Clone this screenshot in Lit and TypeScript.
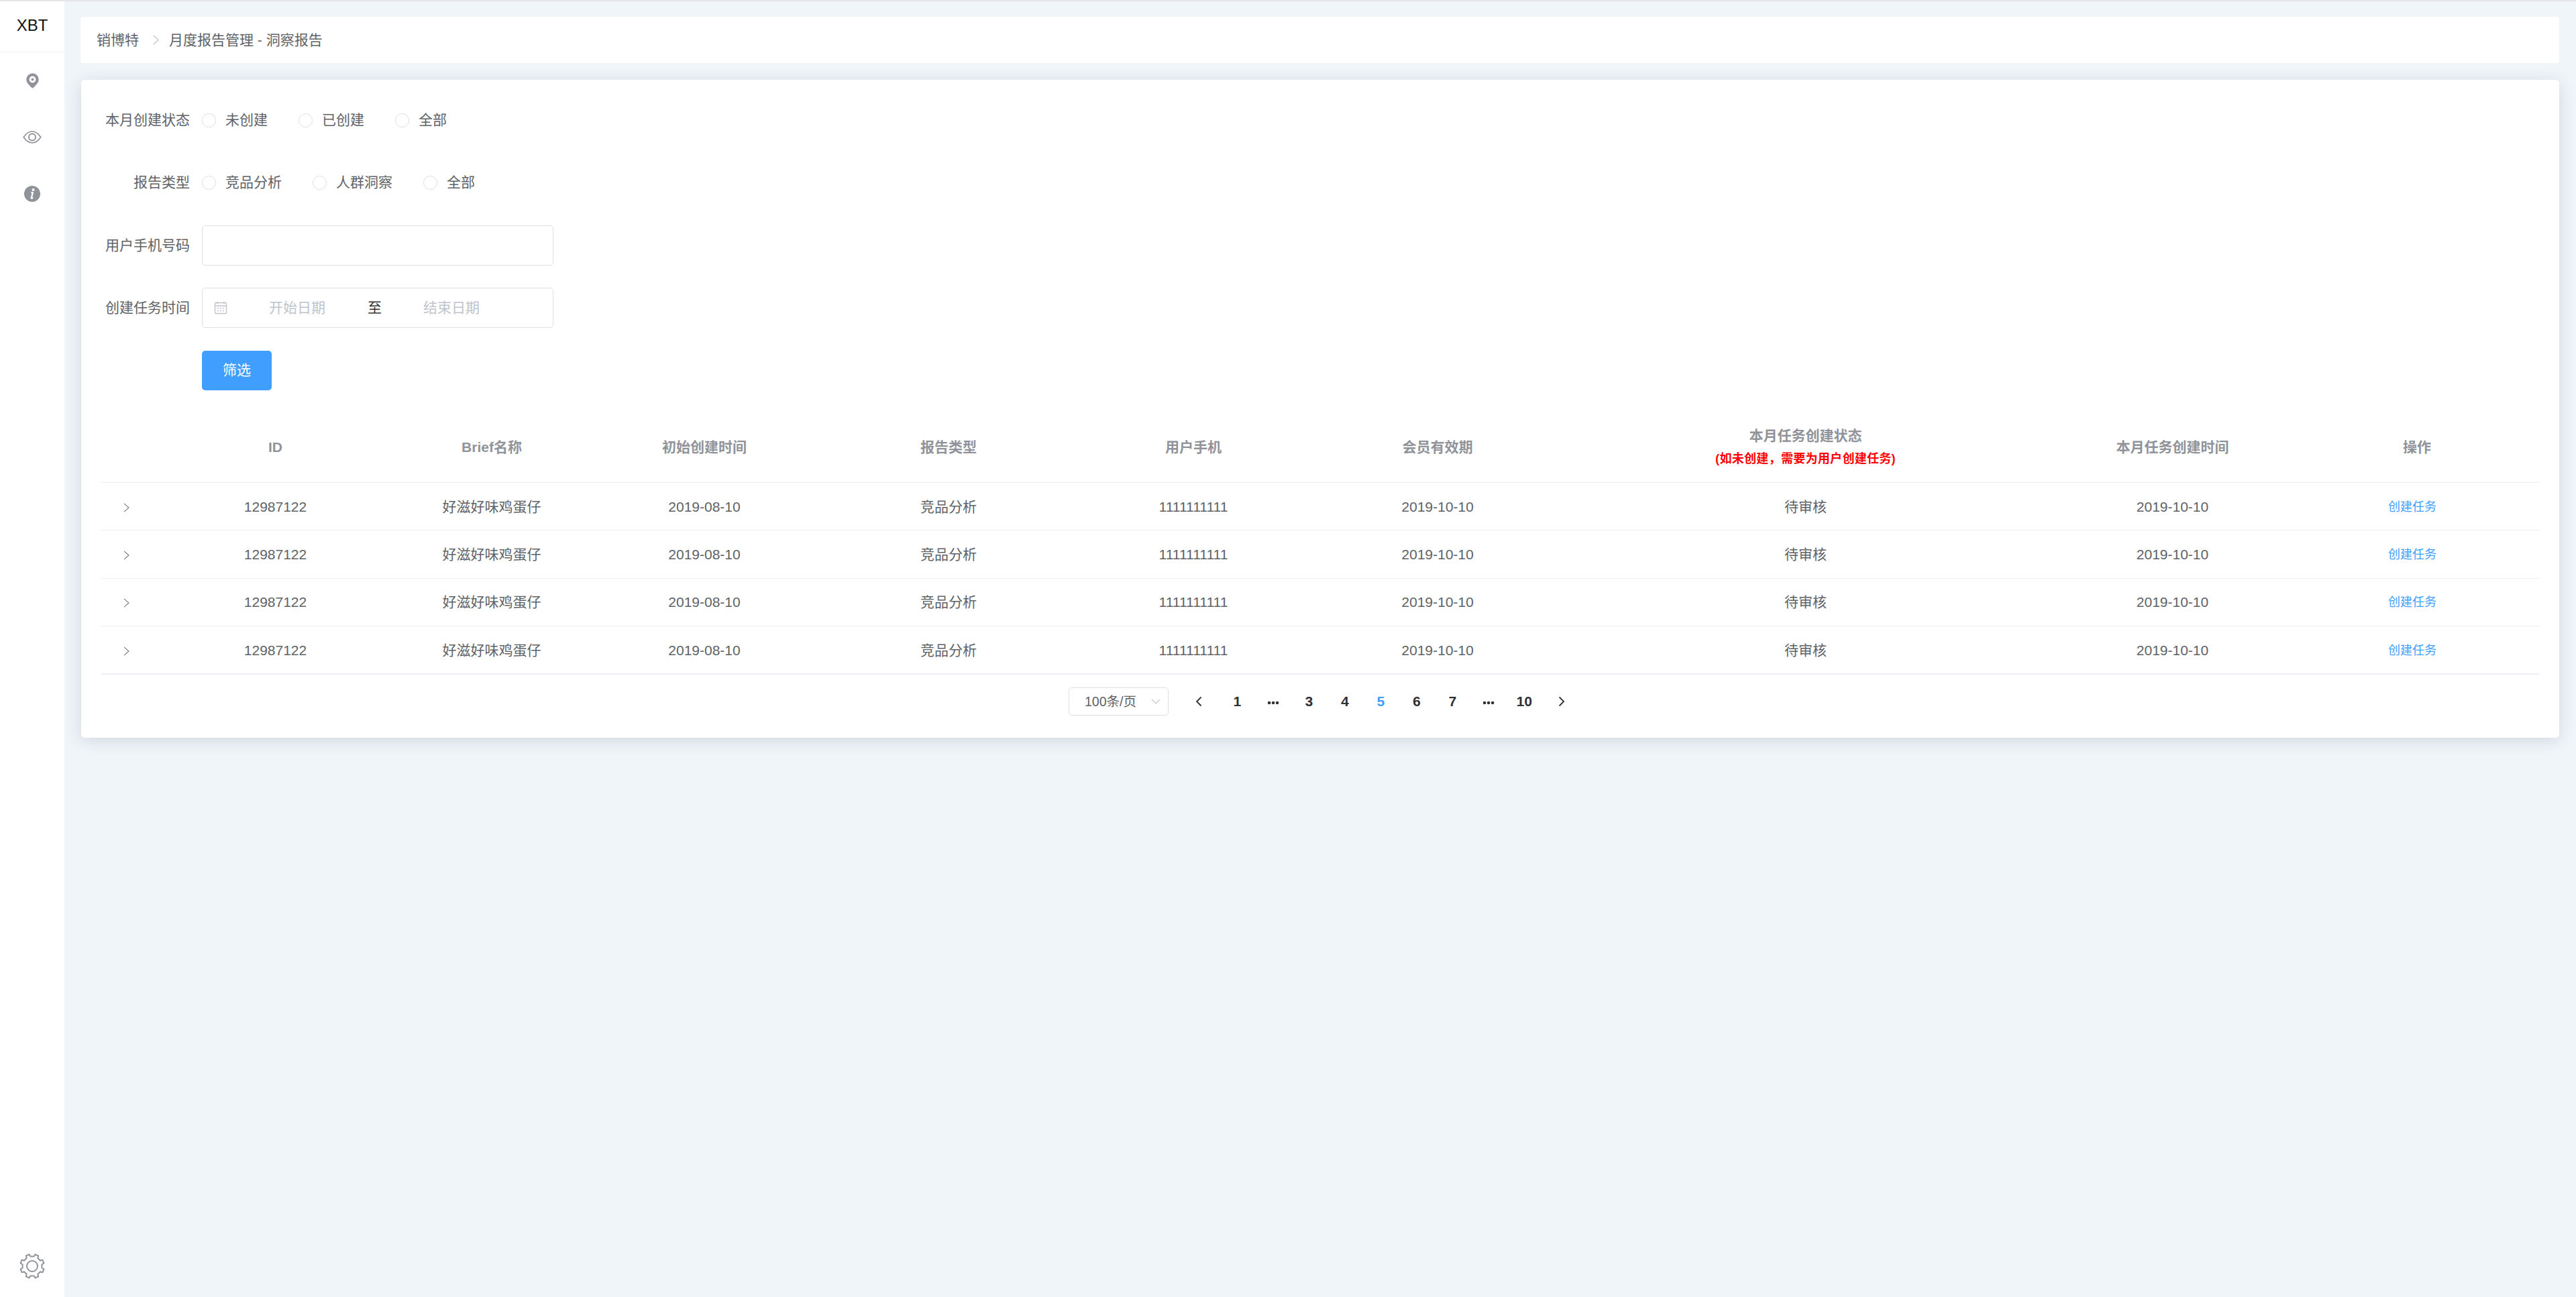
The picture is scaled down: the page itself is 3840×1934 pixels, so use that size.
import { LitElement, html, css, svg } from "lit";
import { customElement } from "lit/decorators.js";

const gearPath = (() => {
  const cx = 19, cy = 19, n = 8, ro = 18, ri = 14.6;
  const pts: string[] = [];
  for (let i = 0; i < n; i++) {
    const a = ((i + 0.5) * 2 * Math.PI) / n;
    const w = 0.14, g = 0.22;
    for (const [r, d] of [[ri, -g], [ro, -w], [ro, w], [ri, g]] as [number, number][]) {
      pts.push(`${(cx + r * Math.cos(a + d)).toFixed(2)} ${(cy + r * Math.sin(a + d)).toFixed(2)}`);
    }
  }
  return "M" + pts.join("L") + "Z";
})();

const rows = [0, 1, 2, 3];
const pages = ["1", "more", "3", "4", "5", "6", "7", "more", "10"];

@customElement("app-root")
export class AppRoot extends LitElement {
  static styles = css`
    :host { display: block; font-family: "Liberation Sans", "Noto Sans CJK SC", sans-serif; color: #606266; font-size: 21px; line-height: 30px; }
    * { box-sizing: border-box; }
    .page { display: flex; height: 1934px; background: #f0f5f9; border-top: 2px solid #e3e5e8; }
    .side { width: 96px; flex: none; background: #fff; display: flex; flex-direction: column; align-items: center; }
    .logo { width: 100%; height: 76px; border-bottom: 1px solid #f1f2f4; display: flex; align-items: center; justify-content: center; font-size: 24px; color: #111; padding-bottom: 3px; }
    .nav { display: flex; flex-direction: column; align-items: center; gap: 48.5px; padding-top: 24px; }
    .nav-item { width: 36px; height: 36px; display: flex; align-items: center; justify-content: center; }
    .gear { margin-top: auto; margin-bottom: 27px; display: block; }
    .gear svg { display: block; }
    .main { flex: 1; min-width: 0; padding: 23px 25px 0 24px; display: flex; flex-direction: column; gap: 25px; }
    .crumb { height: 69px; background: #fff; border-radius: 4px; display: flex; align-items: center; padding: 0 0 0 24px; }
    .crumb-sep { width: 9px; height: 15px; margin: 0 15px 0 21px; }
    .card { margin-left: 1px; background: #fff; border-radius: 5px; box-shadow: 0 4px 26px rgba(20, 40, 70, 0.14); padding: 30px 30px 0; height: 981px; }
    .form { display: flex; flex-direction: column; gap: 33.3px; }
    .form-row { display: flex; align-items: center; height: 60px; }
    .label { width: 132px; text-align: right; margin-right: 18px; flex: none; white-space: nowrap; }
    .radio { display: flex; align-items: center; margin-right: 46px; }
    .dot { width: 21px; height: 21px; border: 1px solid #dcdfe6; border-radius: 50%; margin-right: 14px; background: #fff; }
    .input { width: 524px; height: 60px; border: 1px solid #dcdfe6; border-radius: 5px; background: #fff; }
    .date { display: flex; align-items: center; }
    .cal { width: 20px; height: 20px; margin-left: 17px; flex: none; }
    .ph { color: #c0c4cc; width: 84px; white-space: nowrap; }
    .ph-a { margin-left: 62px; }
    .to { color: #303133; margin-left: 63px; }
    .ph-b { margin-left: 62px; }
    .btn { width: 104px; height: 59px; background: #409eff; color: #fff; border-radius: 5px; display: flex; align-items: center; justify-content: center; }
    .table { margin-top: 32px; }
    .tr { display: grid; grid-template-columns: 75px 369px 276px 358px 370px 360px 368px 729px 365px 364px; align-items: center; text-align: center; border-bottom: 1px solid #ebeef5; height: 71.3px; padding-top: 1px; }
    .tr > div { white-space: nowrap; }
    .head { height: 106px; font-weight: 700; color: #909399; padding-top: 0; }
    .tr.last { border-bottom: 2px solid #ebeef5; height: 72px; }
    .state { padding-bottom: 4px; }
    .hint { color: #f00; font-size: 18px; margin-top: 8px; line-height: 22px; letter-spacing: 0.3px; }
    .link { color: #409eff; font-size: 18px; padding-right: 14px; }
    .chev { display: block; margin: 2px auto 0; width: 9px; height: 14px; }
    .pager { display: flex; align-items: center; margin-top: 18.6px; margin-left: 1442px; height: 42px; }
    .size { width: 149px; height: 42px; border: 1px solid #dcdfe6; border-radius: 5px; display: flex; align-items: center; justify-content: space-between; padding: 0 11px 0 23px; font-size: 19.5px; color: #606266; margin-right: 18px; }
    .pg { width: 53.5px; text-align: center; font-size: 21px; font-weight: 700; color: #303133; flex: none; display: flex; align-items: center; justify-content: center; height: 42px; }
    .pg.on { color: #409eff; }
    .arrow { width: 53.5px; display: flex; justify-content: center; flex: none; }
    .arrow.prev { margin-right: 4px; }
    .arrow.next { margin-left: 2.5px; }
    .more { display: block; margin-top: 4px; }
  `;

  private radio(t: string) {
    return html`<div class="radio"><span class="dot"></span><span>${t}</span></div>`;
  }

  render() {
    return html`<div class="page">
      <aside class="side">
        <div class="logo">XBT</div>
        <div class="nav">
          <div class="nav-item"><svg width="19" height="23" viewBox="0 0 19 23">
            <path fill="#909399" d="M9.5.3a9.2 9.2 0 0 0-9.2 9.2c0 5.2 4.6 9 9.2 13.3 4.6-4.3 9.2-8.1 9.2-13.3A9.2 9.2 0 0 0 9.5.3z"/>
            <circle cx="9.5" cy="9.5" r="4.9" fill="#fff"/><circle cx="9.5" cy="9.5" r="2" fill="#909399"/></svg></div>
          <div class="nav-item"><svg width="28" height="19" viewBox="0 0 28 19" fill="none" stroke="#909399" stroke-width="1.7">
            <path d="M1.2 9.5C5 4 9 1 14 1s9 3 12.8 8.5C23 15 19 18 14 18S5 15 1.2 9.5z"/><circle cx="14" cy="9.5" r="5" stroke-width="1.9"/></svg></div>
          <div class="nav-item"><svg width="24" height="24" viewBox="0 0 24 24">
            <circle cx="12" cy="12" r="12" fill="#909399"/><circle cx="13.5" cy="6" r="2" fill="#fff"/>
            <path d="M10.4 10.2h2.6L10.7 18c-.2.9.7 1.1 2.4-.6" fill="none" stroke="#fff" stroke-width="2.2" stroke-linejoin="round"/></svg></div>
        </div>
        <div class="gear">${svg`<svg width="38" height="38" viewBox="0 0 38 38" fill="none" stroke="#909399" stroke-width="2"><path d=${gearPath}/><circle cx="19" cy="19" r="8"/></svg>`}</div>
      </aside>
      <main class="main">
        <div class="crumb">
          <span>销博特</span>
          <svg class="crumb-sep" viewBox="0 0 9 15" fill="none" stroke="#c0c4cc" stroke-width="1.2"><path d="M.8.8 8 7.5.8 14.2"/></svg>
          <span>月度报告管理 - 洞察报告</span>
        </div>
        <section class="card">
          <div class="form">
            <div class="form-row"><div class="label">本月创建状态</div>${["未创建", "已创建", "全部"].map((t) => this.radio(t))}</div>
            <div class="form-row"><div class="label">报告类型</div>${["竞品分析", "人群洞察", "全部"].map((t) => this.radio(t))}</div>
            <div class="form-row"><div class="label">用户手机号码</div><div class="input"></div></div>
            <div class="form-row"><div class="label">创建任务时间</div>
              <div class="input date">
                <svg class="cal" viewBox="0 0 20 20" fill="none" stroke="#c0c4cc" stroke-width="1.4"><rect x="1.5" y="2.5" width="17" height="16" rx="1"/><path d="M1.5 7h17M5 1v3M15 1v3M5 10.5h2M9 10.5h2M13 10.5h2M5 14.5h2M9 14.5h2M13 14.5h2"/></svg>
                <span class="ph ph-a">开始日期</span><span class="to">至</span><span class="ph ph-b">结束日期</span>
              </div>
            </div>
            <div class="form-row"><div class="label"></div><div class="btn">筛选</div></div>
          </div>
          <div class="table">
            <div class="tr head">
              <div></div><div>ID</div><div>Brief名称</div><div>初始创建时间</div><div>报告类型</div><div>用户手机</div><div>会员有效期</div>
              <div class="state"><div>本月任务创建状态</div><div class="hint">(如未创建，需要为用户创建任务)</div></div>
              <div>本月任务创建时间</div><div>操作</div>
            </div>
            ${rows.map((i) => html`<div class="tr ${i === 3 ? "last" : ""}">
              <div><svg class="chev" viewBox="0 0 9 14" fill="none" stroke="#777a80" stroke-width="1.1"><path d="M1 .8 8 7l-7 6.2"/></svg></div>
              <div>12987122</div><div>好滋好味鸡蛋仔</div><div>2019-08-10</div><div>竞品分析</div><div>1111111111</div><div>2019-10-10</div><div>待审核</div><div>2019-10-10</div><div class="link">创建任务</div>
            </div>`)}
          </div>
          <div class="pager">
            <div class="size"><span>100条/页</span><svg width="14" height="8" viewBox="0 0 14 8" fill="none" stroke="#c0c4cc" stroke-width="1.2"><path d="m1 .8 6 6.2 6-6.2"/></svg></div>
            <div class="arrow prev"><svg width="10" height="16" viewBox="0 0 10 16" fill="none" stroke="#303133" stroke-width="1.8"><path d="M8.5 1.5 2 8l6.5 6.5"/></svg></div>
            ${pages.map((p) => p === "more"
              ? html`<div class="pg"><svg class="more" width="18" height="6" viewBox="0 0 18 6" fill="#303133"><circle cx="3" cy="3" r="2.3"/><circle cx="9" cy="3" r="2.3"/><circle cx="15" cy="3" r="2.3"/></svg></div>`
              : html`<div class="pg ${p === "5" ? "on" : ""}">${p}</div>`)}
            <div class="arrow next"><svg width="10" height="16" viewBox="0 0 10 16" fill="none" stroke="#303133" stroke-width="1.8"><path d="M1.5 1.5 8 8l-6.5 6.5"/></svg></div>
          </div>
        </section>
      </main>
    </div>`;
  }
}
